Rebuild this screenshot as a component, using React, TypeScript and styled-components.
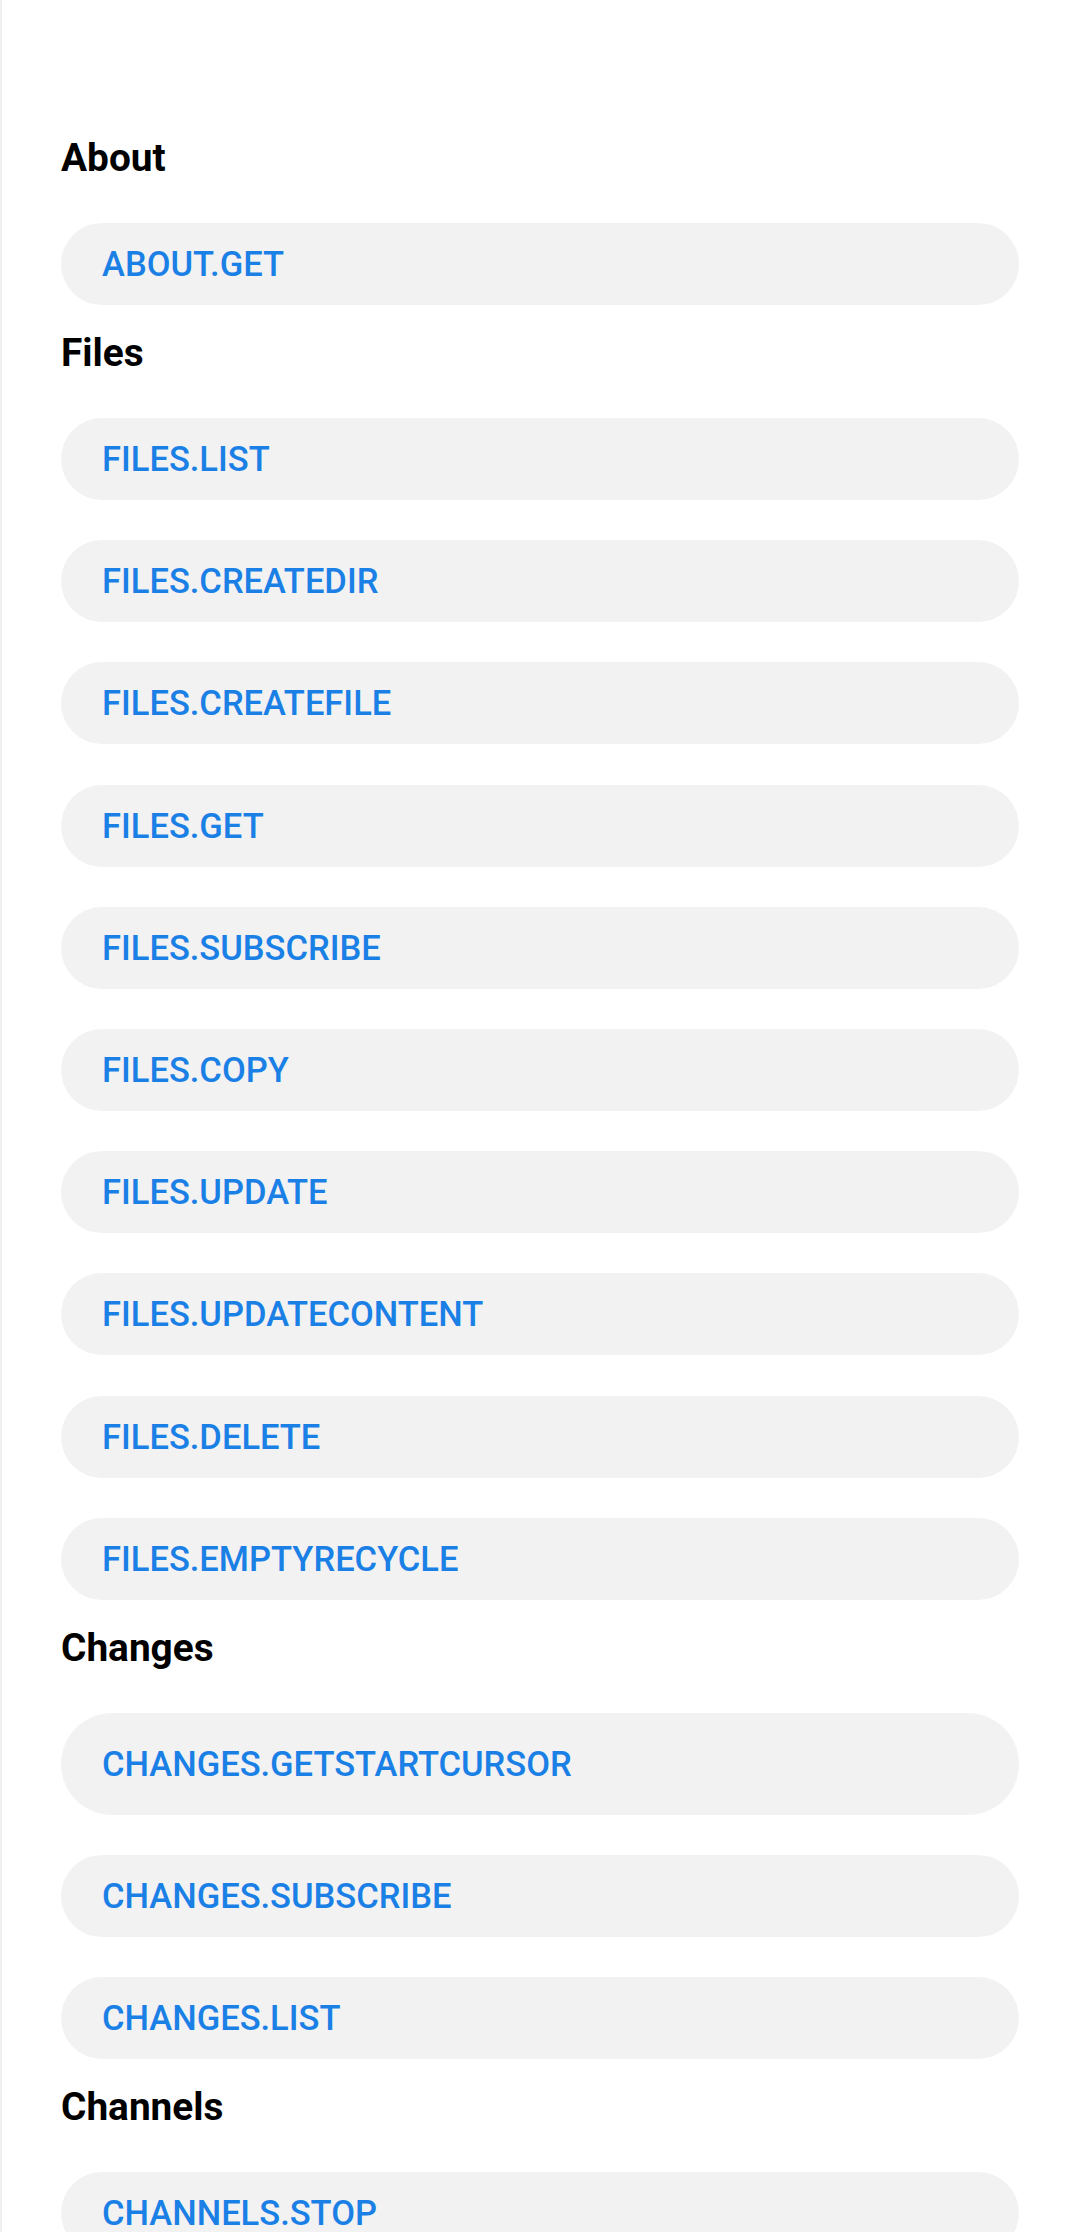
import React from "react";
import styled, { createGlobalStyle } from "styled-components";

const GlobalStyle = createGlobalStyle`
  html, body {
    margin: 0;
    padding: 0;
    background: #ffffff;
    font-family: Roboto, "Noto Sans", "Liberation Sans", sans-serif;
  }
`;

const Page = styled.div`
  box-sizing: border-box;
  width: 1080px;
  min-height: 2232px;
  border-left: 2px solid #efefef;
  padding: 136px 61px 0 59px;
  display: flex;
  flex-direction: column;
  gap: 26px;
`;

const Section = styled.section`
  display: flex;
  flex-direction: column;
`;

const Heading = styled.h2`
  margin: 0 0 43px;
  font-size: 38.8px;
  line-height: 44px;
  font-weight: 700;
  color: #000000;
`;

const List = styled.div`
  display: flex;
  flex-direction: column;
  gap: 40.2px;
`;

const Pill = styled.button<{ $tall?: boolean }>`
  box-sizing: border-box;
  display: flex;
  align-items: center;
  width: 100%;
  height: ${(p) => (p.$tall ? "102px" : "82px")};
  padding: 0 41px;
  border: none;
  border-radius: 51px;
  background: #f2f2f2;
  color: #1a80e6;
  font-family: Roboto, "Noto Sans", "Liberation Sans", sans-serif;
  font-size: 34.5px;
  font-weight: 500;
  text-transform: uppercase;
  text-align: left;
  cursor: pointer;
`;

type Group = { title: string; items: { label: string; tall?: boolean }[] };

const groups: Group[] = [
  { title: "About", items: [{ label: "about.get" }] },
  {
    title: "Files",
    items: [
      { label: "files.list" },
      { label: "files.createDir" },
      { label: "files.createFile" },
      { label: "files.get" },
      { label: "files.subscribe" },
      { label: "files.copy" },
      { label: "files.update" },
      { label: "files.updateContent" },
      { label: "files.delete" },
      { label: "files.emptyRecycle" },
    ],
  },
  {
    title: "Changes",
    items: [
      { label: "changes.getStartCursor", tall: true },
      { label: "changes.subscribe" },
      { label: "changes.list" },
    ],
  },
  { title: "Channels", items: [{ label: "channels.stop" }] },
];

export default function App() {
  return (
    <>
      <GlobalStyle />
      <Page>
        {groups.map((g) => (
          <Section key={g.title}>
            <Heading>{g.title}</Heading>
            <List>
              {g.items.map((it) => (
                <Pill key={it.label} $tall={it.tall}>
                  {it.label}
                </Pill>
              ))}
            </List>
          </Section>
        ))}
      </Page>
    </>
  );
}
